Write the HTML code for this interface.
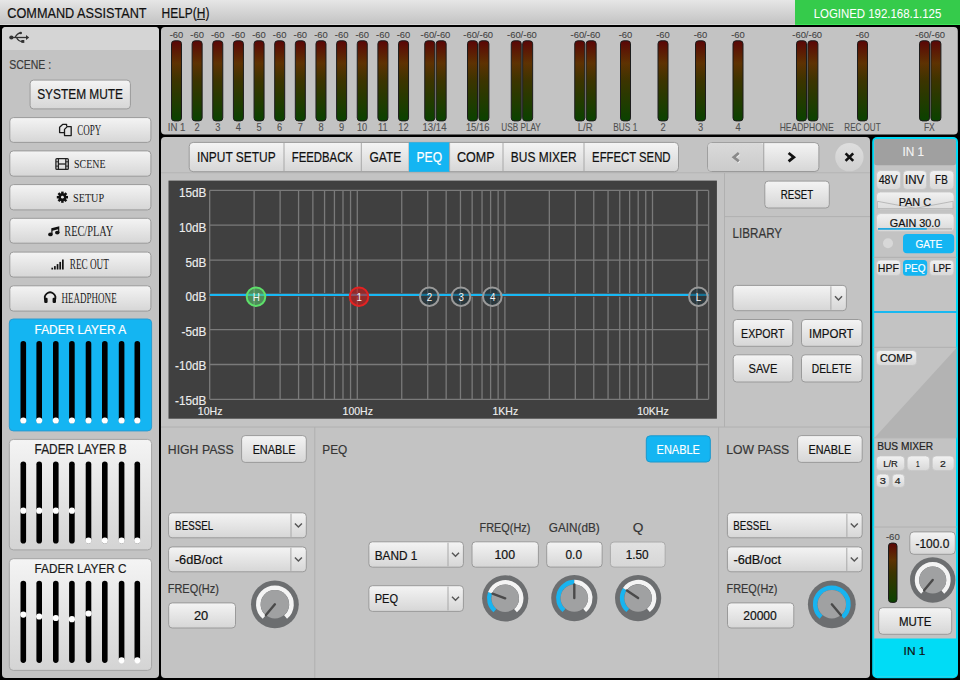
<!DOCTYPE html>
<html><head><meta charset="utf-8"><style>
html,body{margin:0;padding:0;background:#000;width:960px;height:680px;overflow:hidden}
svg{display:block}
</style></head><body>
<svg width="960" height="680" viewBox="0 0 960 680">
<defs>
<linearGradient id="menu" x1="0" y1="0" x2="0" y2="1"><stop offset="0" stop-color="#e6e6e6"/><stop offset="1" stop-color="#c3c3c3"/></linearGradient>
<linearGradient id="btn" x1="0" y1="0" x2="0" y2="1"><stop offset="0" stop-color="#f4f4f4"/><stop offset="1" stop-color="#d6d6d6"/></linearGradient>
<linearGradient id="fader" x1="0" y1="0" x2="0" y2="1"><stop offset="0" stop-color="#f4f4f4"/><stop offset="1" stop-color="#d4d4d4"/></linearGradient>
<linearGradient id="meter" x1="0" y1="0" x2="0" y2="1"><stop offset="0" stop-color="#5a0606"/><stop offset="0.28" stop-color="#5e3202"/><stop offset="0.5" stop-color="#3c3400"/><stop offset="1" stop-color="#0a4200"/></linearGradient>
<linearGradient id="sbtn" x1="0" y1="0" x2="0" y2="1"><stop offset="0" stop-color="#f2f2f2"/><stop offset="1" stop-color="#d8d8d8"/></linearGradient>
<linearGradient id="qbtn" x1="0" y1="0" x2="0" y2="1"><stop offset="0" stop-color="#e2e2e2"/><stop offset="1" stop-color="#d6d6d6"/></linearGradient>
<linearGradient id="navl" x1="0" y1="0" x2="0" y2="1"><stop offset="0" stop-color="#dadada"/><stop offset="1" stop-color="#cbcbcb"/></linearGradient>
<linearGradient id="closeg" x1="0" y1="0" x2="0" y2="1"><stop offset="0" stop-color="#dedede"/><stop offset="1" stop-color="#d0d0d0"/></linearGradient>
</defs>
<rect x="0" y="0" width="960.00" height="680.00" rx="0" fill="#000" />
<rect x="0" y="0" width="960.00" height="24.00" rx="0" fill="url(#menu)" />
<rect x="0" y="24" width="960.00" height="1.00" rx="0" fill="#d6d6d6" />
<rect x="795" y="0" width="165.00" height="24.00" rx="0" fill="#35cb4b" />
<rect x="795" y="24" width="165.00" height="1.00" rx="0" fill="#3ee65a" />
<text x="7.37" y="18.00" font-family="Liberation Sans" font-weight="normal" font-size="14.13" fill="#111" stroke="#111" stroke-width="0.2" textLength="139.17" lengthAdjust="spacingAndGlyphs" >COMMAND ASSISTANT</text>
<text x="161.54" y="18.00" font-family="Liberation Sans" font-weight="normal" font-size="14.13" fill="#111" stroke="#111" stroke-width="0.2" textLength="47.87" lengthAdjust="spacingAndGlyphs" >HELP(H)</text>
<line x1="196.5" y1="19.4" x2="205" y2="19.4" stroke="#111" stroke-width="1"/>
<text x="813.69" y="17.70" font-family="Liberation Sans" font-weight="normal" font-size="12.03" fill="#fff" stroke="#fff" stroke-width="0.05" textLength="127.56" lengthAdjust="spacingAndGlyphs" >LOGINED 192.168.1.125</text>
<rect x="2" y="27" width="157.00" height="651.00" rx="4" fill="#c3c3c3" />
<path d="M2 31 Q2 27 6 27 L155 27 Q159 27 159 31 L159 50 L2 50 Z" fill="#d5d5d5"/>
<g fill="#333" stroke="#333"><circle cx="11.4" cy="37.5" r="2.1" stroke="none"/><line x1="11.4" y1="37.5" x2="27" y2="37.5" stroke-width="1.3"/><path d="M26 34.9 L29.2 37.5 L26 40.1 Z" stroke="none"/><path d="M15 37.5 Q17.5 33 20.5 33" fill="none" stroke-width="1.3"/><path d="M16.5 37.5 Q18.5 41.5 22 41.5" fill="none" stroke-width="1.3"/><circle cx="20.7" cy="33" r="1.3" stroke="none"/><rect x="21.4" y="40" width="2.9" height="2.9" stroke="none"/></g>
<text x="9.23" y="69.00" font-family="Liberation Sans" font-weight="normal" font-size="11.88" fill="#3a3a3a" stroke="#3a3a3a" stroke-width="0.2" textLength="41.98" lengthAdjust="spacingAndGlyphs" >SCENE :</text>
<rect x="30.1" y="80.1" width="100.30" height="28.80" rx="3.5" fill="url(#btn)" stroke="#9a9a9a" stroke-width="1" />
<text x="37.17" y="99.20" font-family="Liberation Sans" font-weight="normal" font-size="13.77" fill="#111" stroke="#111" stroke-width="0.2" textLength="85.85" lengthAdjust="spacingAndGlyphs" >SYSTEM MUTE</text>
<rect x="9.799999999999999" y="117.6" width="141.10" height="24.80" rx="3.5" fill="url(#btn)" stroke="#9a9a9a" stroke-width="1" />
<text x="77.14" y="134.70" font-family="Liberation Serif" font-weight="normal" font-size="13.59" fill="#222" textLength="24.06" lengthAdjust="spacingAndGlyphs" >COPY</text>
<rect x="9.799999999999999" y="150.9" width="141.10" height="25.30" rx="3.5" fill="url(#btn)" stroke="#9a9a9a" stroke-width="1" />
<text x="74.06" y="168.00" font-family="Liberation Serif" font-weight="normal" font-size="12.67" fill="#222" textLength="31.41" lengthAdjust="spacingAndGlyphs" >SCENE</text>
<rect x="9.799999999999999" y="184.6" width="141.10" height="25.30" rx="3.5" fill="url(#btn)" stroke="#9a9a9a" stroke-width="1" />
<text x="73.04" y="201.70" font-family="Liberation Serif" font-weight="normal" font-size="13.28" fill="#222" textLength="31.03" lengthAdjust="spacingAndGlyphs" >SETUP</text>
<rect x="9.799999999999999" y="218.29999999999998" width="141.10" height="24.90" rx="3.5" fill="url(#btn)" stroke="#9a9a9a" stroke-width="1" />
<text x="64.24" y="235.75" font-family="Liberation Serif" font-weight="normal" font-size="14.50" fill="#222" textLength="48.99" lengthAdjust="spacingAndGlyphs" >REC/PLAY</text>
<rect x="9.799999999999999" y="252.1" width="141.10" height="25.00" rx="3.5" fill="url(#btn)" stroke="#9a9a9a" stroke-width="1" />
<text x="69.77" y="269.25" font-family="Liberation Serif" font-weight="normal" font-size="14.12" fill="#222" textLength="39.12" lengthAdjust="spacingAndGlyphs" >REC OUT</text>
<rect x="9.799999999999999" y="285.8" width="141.10" height="25.30" rx="3.5" fill="url(#btn)" stroke="#9a9a9a" stroke-width="1" />
<text x="61.52" y="303.00" font-family="Liberation Serif" font-weight="normal" font-size="14.12" fill="#222" textLength="55.14" lengthAdjust="spacingAndGlyphs" >HEADPHONE</text>
<g fill="none" stroke="#1a1a1a" stroke-width="1.3" stroke-linejoin="round"><path d="M64 132.6 L59.6 132.6 L59.6 127.2 L62.6 124.4 L66.6 124.4 L66.6 126.6"/><path d="M64.5 135.6 L64.5 129.4 L67.3 126.6 L71.2 126.6 L71.2 135.6 Z"/></g>
<g fill="none" stroke="#222" stroke-width="1.3"><rect x="55.9" y="158.6" width="12.4" height="10.8" rx="1"/><line x1="58.4" y1="158.6" x2="58.4" y2="169.4"/><line x1="65.8" y1="158.6" x2="65.8" y2="169.4"/><line x1="58.4" y1="164" x2="65.8" y2="164"/></g><g fill="#222"><rect x="56" y="161.3" width="2.4" height="1"/><rect x="56" y="165.6" width="2.4" height="1"/><rect x="65.8" y="161.3" width="2.4" height="1"/><rect x="65.8" y="165.6" width="2.4" height="1"/></g>
<g fill="#111"><rect x="61.15" y="191.6" width="2.5" height="3" transform="rotate(0 62.4 197.2)"/><rect x="61.15" y="191.6" width="2.5" height="3" transform="rotate(45 62.4 197.2)"/><rect x="61.15" y="191.6" width="2.5" height="3" transform="rotate(90 62.4 197.2)"/><rect x="61.15" y="191.6" width="2.5" height="3" transform="rotate(135 62.4 197.2)"/><rect x="61.15" y="191.6" width="2.5" height="3" transform="rotate(180 62.4 197.2)"/><rect x="61.15" y="191.6" width="2.5" height="3" transform="rotate(225 62.4 197.2)"/><rect x="61.15" y="191.6" width="2.5" height="3" transform="rotate(270 62.4 197.2)"/><rect x="61.15" y="191.6" width="2.5" height="3" transform="rotate(315 62.4 197.2)"/><circle cx="62.4" cy="197.2" r="3.9"/></g><circle cx="62.4" cy="197.2" r="1.4" fill="#e8e8e8"/>
<g fill="#111"><ellipse cx="50.4" cy="234.4" rx="2.3" ry="1.9"/><ellipse cx="57.3" cy="232.6" rx="2.3" ry="1.9"/><path d="M51.3 234.4 L51.3 228.3 L59.3 226.2 L59.3 232.6 L58.1 232.6 L58.1 229.2 L52.5 230.7 L52.5 234.4 Z"/></g>
<rect x="51.4" y="267.7" width="1.70" height="1.80" rx="0" fill="#111" />
<rect x="54.05" y="266.1" width="1.70" height="3.40" rx="0" fill="#111" />
<rect x="56.699999999999996" y="264.1" width="1.70" height="5.40" rx="0" fill="#111" />
<rect x="59.349999999999994" y="261.9" width="1.70" height="7.60" rx="0" fill="#111" />
<rect x="62.0" y="259.5" width="1.70" height="10.00" rx="0" fill="#111" />
<g><path d="M45.6 300.2 A5.2 5.2 0 1 1 54.6 300.2" fill="none" stroke="#111" stroke-width="1.8"/><rect x="44.2" y="297.8" width="3.4" height="5.2" rx="1.2" fill="#111"/><rect x="52.6" y="297.8" width="3.4" height="5.2" rx="1.2" fill="#111"/></g>
<rect x="9.3" y="319.0" width="142.30" height="111.90" rx="4" fill="#14b5f2" stroke="#2a9ad0" stroke-width="1" />
<text x="34.55" y="334.00" font-family="Liberation Sans" font-weight="normal" font-size="13.48" fill="#fff" stroke="#fff" stroke-width="0.2" textLength="91.57" lengthAdjust="spacingAndGlyphs" >FADER LAYER A</text>
<line x1="23.3" y1="343.9" x2="23.3" y2="420.4" stroke="#000" stroke-width="5.6" stroke-linecap="round"/>
<circle cx="23.3" cy="420.5" r="3.1" fill="#fff"/>
<line x1="39.2" y1="343.9" x2="39.2" y2="420.4" stroke="#000" stroke-width="5.6" stroke-linecap="round"/>
<circle cx="39.2" cy="420.5" r="3.1" fill="#fff"/>
<line x1="55.8" y1="343.9" x2="55.8" y2="420.4" stroke="#000" stroke-width="5.6" stroke-linecap="round"/>
<circle cx="55.8" cy="420.5" r="3.1" fill="#fff"/>
<line x1="71.9" y1="343.9" x2="71.9" y2="420.4" stroke="#000" stroke-width="5.6" stroke-linecap="round"/>
<circle cx="71.9" cy="420.5" r="3.1" fill="#fff"/>
<line x1="88.5" y1="343.9" x2="88.5" y2="420.4" stroke="#000" stroke-width="5.6" stroke-linecap="round"/>
<circle cx="88.5" cy="420.5" r="3.1" fill="#fff"/>
<line x1="104.8" y1="343.9" x2="104.8" y2="420.4" stroke="#000" stroke-width="5.6" stroke-linecap="round"/>
<circle cx="104.8" cy="420.5" r="3.1" fill="#fff"/>
<line x1="121.6" y1="343.9" x2="121.6" y2="420.4" stroke="#000" stroke-width="5.6" stroke-linecap="round"/>
<circle cx="121.6" cy="420.5" r="3.1" fill="#fff"/>
<line x1="137.3" y1="343.9" x2="137.3" y2="420.4" stroke="#000" stroke-width="5.6" stroke-linecap="round"/>
<circle cx="137.3" cy="420.5" r="3.1" fill="#fff"/>
<rect x="9.3" y="439.40000000000003" width="142.30" height="110.50" rx="4" fill="url(#fader)" stroke="#a4a4a4" stroke-width="1" />
<text x="34.55" y="454.30" font-family="Liberation Sans" font-weight="normal" font-size="13.77" fill="#1a1a1a" stroke="#1a1a1a" stroke-width="0.2" textLength="92.17" lengthAdjust="spacingAndGlyphs" >FADER LAYER B</text>
<line x1="23.3" y1="464.3" x2="23.3" y2="540.8" stroke="#000" stroke-width="5.6" stroke-linecap="round"/>
<circle cx="23.3" cy="510.7" r="3.1" fill="#fff"/>
<line x1="39.2" y1="464.3" x2="39.2" y2="540.8" stroke="#000" stroke-width="5.6" stroke-linecap="round"/>
<circle cx="39.2" cy="510.7" r="3.1" fill="#fff"/>
<line x1="55.8" y1="464.3" x2="55.8" y2="540.8" stroke="#000" stroke-width="5.6" stroke-linecap="round"/>
<circle cx="55.8" cy="510.7" r="3.1" fill="#fff"/>
<line x1="71.9" y1="464.3" x2="71.9" y2="540.8" stroke="#000" stroke-width="5.6" stroke-linecap="round"/>
<circle cx="71.9" cy="510.7" r="3.1" fill="#fff"/>
<line x1="88.5" y1="464.3" x2="88.5" y2="540.8" stroke="#000" stroke-width="5.6" stroke-linecap="round"/>
<circle cx="88.5" cy="540.6" r="3.1" fill="#fff"/>
<line x1="104.8" y1="464.3" x2="104.8" y2="540.8" stroke="#000" stroke-width="5.6" stroke-linecap="round"/>
<circle cx="104.8" cy="540.6" r="3.1" fill="#fff"/>
<line x1="121.6" y1="464.3" x2="121.6" y2="540.8" stroke="#000" stroke-width="5.6" stroke-linecap="round"/>
<circle cx="121.6" cy="540.6" r="3.1" fill="#fff"/>
<line x1="137.3" y1="464.3" x2="137.3" y2="540.8" stroke="#000" stroke-width="5.6" stroke-linecap="round"/>
<circle cx="137.3" cy="540.6" r="3.1" fill="#fff"/>
<rect x="9.3" y="558.7" width="142.30" height="111.70" rx="4" fill="url(#fader)" stroke="#a4a4a4" stroke-width="1" />
<text x="34.56" y="573.30" font-family="Liberation Sans" font-weight="normal" font-size="13.04" fill="#1a1a1a" stroke="#1a1a1a" stroke-width="0.2" textLength="91.98" lengthAdjust="spacingAndGlyphs" >FADER LAYER C</text>
<line x1="23.3" y1="583.6" x2="23.3" y2="660.1" stroke="#000" stroke-width="5.6" stroke-linecap="round"/>
<circle cx="23.3" cy="614.6" r="3.1" fill="#fff"/>
<line x1="39.2" y1="583.6" x2="39.2" y2="660.1" stroke="#000" stroke-width="5.6" stroke-linecap="round"/>
<circle cx="39.2" cy="616.5" r="3.1" fill="#fff"/>
<line x1="55.8" y1="583.6" x2="55.8" y2="660.1" stroke="#000" stroke-width="5.6" stroke-linecap="round"/>
<circle cx="55.8" cy="618" r="3.1" fill="#fff"/>
<line x1="71.9" y1="583.6" x2="71.9" y2="660.1" stroke="#000" stroke-width="5.6" stroke-linecap="round"/>
<circle cx="71.9" cy="619.2" r="3.1" fill="#fff"/>
<line x1="88.5" y1="583.6" x2="88.5" y2="660.1" stroke="#000" stroke-width="5.6" stroke-linecap="round"/>
<circle cx="88.5" cy="613.5" r="3.1" fill="#fff"/>
<line x1="104.8" y1="583.6" x2="104.8" y2="660.1" stroke="#000" stroke-width="5.6" stroke-linecap="round"/>
<line x1="121.6" y1="583.6" x2="121.6" y2="660.1" stroke="#000" stroke-width="5.6" stroke-linecap="round"/>
<circle cx="121.6" cy="660.3" r="3.1" fill="#fff"/>
<line x1="137.3" y1="583.6" x2="137.3" y2="660.1" stroke="#000" stroke-width="5.6" stroke-linecap="round"/>
<circle cx="137.3" cy="660.3" r="3.1" fill="#fff"/>
<rect x="161" y="27" width="796.80" height="107.50" rx="4" fill="#c3c3c3" />
<rect x="171.5" y="40.8" width="10.00" height="80.10" rx="3" fill="url(#meter)" stroke="#1c1c1c" stroke-width="1" />
<text x="169.67" y="38.00" font-family="Liberation Sans" font-weight="normal" font-size="9.71" fill="#444" stroke="#444" stroke-width="0.1" textLength="13.61" lengthAdjust="spacingAndGlyphs" >-60</text>
<text x="167.73" y="130.80" font-family="Liberation Sans" font-weight="normal" font-size="10.29" fill="#505050" stroke="#505050" stroke-width="0.1" textLength="17.69" lengthAdjust="spacingAndGlyphs" >IN 1</text>
<rect x="192.14" y="40.8" width="10.00" height="80.10" rx="3" fill="url(#meter)" stroke="#1c1c1c" stroke-width="1" />
<text x="190.31" y="38.00" font-family="Liberation Sans" font-weight="normal" font-size="9.71" fill="#444" stroke="#444" stroke-width="0.1" textLength="13.61" lengthAdjust="spacingAndGlyphs" >-60</text>
<text x="194.55" y="130.80" font-family="Liberation Sans" font-weight="normal" font-size="10.29" fill="#505050" stroke="#505050" stroke-width="0.1" textLength="5.15" lengthAdjust="spacingAndGlyphs" >2</text>
<rect x="212.78" y="40.8" width="10.00" height="80.10" rx="3" fill="url(#meter)" stroke="#1c1c1c" stroke-width="1" />
<text x="210.95" y="38.00" font-family="Liberation Sans" font-weight="normal" font-size="9.71" fill="#444" stroke="#444" stroke-width="0.1" textLength="13.61" lengthAdjust="spacingAndGlyphs" >-60</text>
<text x="215.23" y="130.80" font-family="Liberation Sans" font-weight="normal" font-size="10.29" fill="#505050" stroke="#505050" stroke-width="0.1" textLength="5.15" lengthAdjust="spacingAndGlyphs" >3</text>
<rect x="233.42000000000002" y="40.8" width="10.00" height="80.10" rx="3" fill="url(#meter)" stroke="#1c1c1c" stroke-width="1" />
<text x="231.59" y="38.00" font-family="Liberation Sans" font-weight="normal" font-size="9.71" fill="#444" stroke="#444" stroke-width="0.1" textLength="13.61" lengthAdjust="spacingAndGlyphs" >-60</text>
<text x="235.87" y="130.80" font-family="Liberation Sans" font-weight="normal" font-size="10.29" fill="#505050" stroke="#505050" stroke-width="0.1" textLength="5.15" lengthAdjust="spacingAndGlyphs" >4</text>
<rect x="254.06" y="40.8" width="10.00" height="80.10" rx="3" fill="url(#meter)" stroke="#1c1c1c" stroke-width="1" />
<text x="252.23" y="38.00" font-family="Liberation Sans" font-weight="normal" font-size="9.71" fill="#444" stroke="#444" stroke-width="0.1" textLength="13.61" lengthAdjust="spacingAndGlyphs" >-60</text>
<text x="256.49" y="130.80" font-family="Liberation Sans" font-weight="normal" font-size="10.29" fill="#505050" stroke="#505050" stroke-width="0.1" textLength="5.15" lengthAdjust="spacingAndGlyphs" >5</text>
<rect x="274.7" y="40.8" width="10.00" height="80.10" rx="3" fill="url(#meter)" stroke="#1c1c1c" stroke-width="1" />
<text x="272.87" y="38.00" font-family="Liberation Sans" font-weight="normal" font-size="9.71" fill="#444" stroke="#444" stroke-width="0.1" textLength="13.61" lengthAdjust="spacingAndGlyphs" >-60</text>
<text x="277.08" y="130.80" font-family="Liberation Sans" font-weight="normal" font-size="10.29" fill="#505050" stroke="#505050" stroke-width="0.1" textLength="5.15" lengthAdjust="spacingAndGlyphs" >6</text>
<rect x="295.34000000000003" y="40.8" width="10.00" height="80.10" rx="3" fill="url(#meter)" stroke="#1c1c1c" stroke-width="1" />
<text x="293.51" y="38.00" font-family="Liberation Sans" font-weight="normal" font-size="9.71" fill="#444" stroke="#444" stroke-width="0.1" textLength="13.61" lengthAdjust="spacingAndGlyphs" >-60</text>
<text x="297.75" y="130.80" font-family="Liberation Sans" font-weight="normal" font-size="10.29" fill="#505050" stroke="#505050" stroke-width="0.1" textLength="5.15" lengthAdjust="spacingAndGlyphs" >7</text>
<rect x="315.98" y="40.8" width="10.00" height="80.10" rx="3" fill="url(#meter)" stroke="#1c1c1c" stroke-width="1" />
<text x="314.15" y="38.00" font-family="Liberation Sans" font-weight="normal" font-size="9.71" fill="#444" stroke="#444" stroke-width="0.1" textLength="13.61" lengthAdjust="spacingAndGlyphs" >-60</text>
<text x="318.41" y="130.80" font-family="Liberation Sans" font-weight="normal" font-size="10.29" fill="#505050" stroke="#505050" stroke-width="0.1" textLength="5.15" lengthAdjust="spacingAndGlyphs" >8</text>
<rect x="336.62" y="40.8" width="10.00" height="80.10" rx="3" fill="url(#meter)" stroke="#1c1c1c" stroke-width="1" />
<text x="334.79" y="38.00" font-family="Liberation Sans" font-weight="normal" font-size="9.71" fill="#444" stroke="#444" stroke-width="0.1" textLength="13.61" lengthAdjust="spacingAndGlyphs" >-60</text>
<text x="339.05" y="130.80" font-family="Liberation Sans" font-weight="normal" font-size="10.29" fill="#505050" stroke="#505050" stroke-width="0.1" textLength="5.15" lengthAdjust="spacingAndGlyphs" >9</text>
<rect x="357.26" y="40.8" width="10.00" height="80.10" rx="3" fill="url(#meter)" stroke="#1c1c1c" stroke-width="1" />
<text x="355.43" y="38.00" font-family="Liberation Sans" font-weight="normal" font-size="9.71" fill="#444" stroke="#444" stroke-width="0.1" textLength="13.61" lengthAdjust="spacingAndGlyphs" >-60</text>
<text x="356.94" y="130.80" font-family="Liberation Sans" font-weight="normal" font-size="10.29" fill="#505050" stroke="#505050" stroke-width="0.1" textLength="10.30" lengthAdjust="spacingAndGlyphs" >10</text>
<rect x="377.9" y="40.8" width="10.00" height="80.10" rx="3" fill="url(#meter)" stroke="#1c1c1c" stroke-width="1" />
<text x="376.07" y="38.00" font-family="Liberation Sans" font-weight="normal" font-size="9.71" fill="#444" stroke="#444" stroke-width="0.1" textLength="13.61" lengthAdjust="spacingAndGlyphs" >-60</text>
<text x="377.97" y="130.80" font-family="Liberation Sans" font-weight="normal" font-size="10.29" fill="#505050" stroke="#505050" stroke-width="0.1" textLength="9.61" lengthAdjust="spacingAndGlyphs" >11</text>
<rect x="398.54" y="40.8" width="10.00" height="80.10" rx="3" fill="url(#meter)" stroke="#1c1c1c" stroke-width="1" />
<text x="396.71" y="38.00" font-family="Liberation Sans" font-weight="normal" font-size="9.71" fill="#444" stroke="#444" stroke-width="0.1" textLength="13.61" lengthAdjust="spacingAndGlyphs" >-60</text>
<text x="398.26" y="130.80" font-family="Liberation Sans" font-weight="normal" font-size="10.29" fill="#505050" stroke="#505050" stroke-width="0.1" textLength="10.30" lengthAdjust="spacingAndGlyphs" >12</text>
<rect x="424.75" y="40.8" width="10.00" height="80.10" rx="3" fill="url(#meter)" stroke="#1c1c1c" stroke-width="1" />
<rect x="436.15" y="40.8" width="10.00" height="80.10" rx="3" fill="url(#meter)" stroke="#1c1c1c" stroke-width="1" />
<text x="420.52" y="38.00" font-family="Liberation Sans" font-weight="normal" font-size="9.71" fill="#444" stroke="#444" stroke-width="0.1" textLength="29.84" lengthAdjust="spacingAndGlyphs" >-60/-60</text>
<text x="422.53" y="130.80" font-family="Liberation Sans" font-weight="normal" font-size="10.29" fill="#505050" stroke="#505050" stroke-width="0.1" textLength="23.98" lengthAdjust="spacingAndGlyphs" >13/14</text>
<rect x="467.5" y="40.8" width="10.00" height="80.10" rx="3" fill="url(#meter)" stroke="#1c1c1c" stroke-width="1" />
<rect x="478.9" y="40.8" width="10.00" height="80.10" rx="3" fill="url(#meter)" stroke="#1c1c1c" stroke-width="1" />
<text x="463.27" y="38.00" font-family="Liberation Sans" font-weight="normal" font-size="9.71" fill="#444" stroke="#444" stroke-width="0.1" textLength="29.84" lengthAdjust="spacingAndGlyphs" >-60/-60</text>
<text x="465.90" y="130.80" font-family="Liberation Sans" font-weight="normal" font-size="10.29" fill="#505050" stroke="#505050" stroke-width="0.1" textLength="23.50" lengthAdjust="spacingAndGlyphs" >15/16</text>
<rect x="511.25" y="40.8" width="10.00" height="80.10" rx="3" fill="url(#meter)" stroke="#1c1c1c" stroke-width="1" />
<rect x="522.65" y="40.8" width="10.00" height="80.10" rx="3" fill="url(#meter)" stroke="#1c1c1c" stroke-width="1" />
<text x="507.02" y="38.00" font-family="Liberation Sans" font-weight="normal" font-size="9.71" fill="#444" stroke="#444" stroke-width="0.1" textLength="29.84" lengthAdjust="spacingAndGlyphs" >-60/-60</text>
<text x="501.29" y="130.80" font-family="Liberation Sans" font-weight="normal" font-size="10.29" fill="#505050" stroke="#505050" stroke-width="0.1" textLength="39.50" lengthAdjust="spacingAndGlyphs" >USB PLAY</text>
<rect x="574.75" y="40.8" width="10.00" height="80.10" rx="3" fill="url(#meter)" stroke="#1c1c1c" stroke-width="1" />
<rect x="586.15" y="40.8" width="10.00" height="80.10" rx="3" fill="url(#meter)" stroke="#1c1c1c" stroke-width="1" />
<text x="570.52" y="38.00" font-family="Liberation Sans" font-weight="normal" font-size="9.71" fill="#444" stroke="#444" stroke-width="0.1" textLength="29.84" lengthAdjust="spacingAndGlyphs" >-60/-60</text>
<text x="577.63" y="130.80" font-family="Liberation Sans" font-weight="normal" font-size="10.29" fill="#505050" stroke="#505050" stroke-width="0.1" textLength="14.97" lengthAdjust="spacingAndGlyphs" >L/R</text>
<rect x="796.5" y="40.8" width="10.00" height="80.10" rx="3" fill="url(#meter)" stroke="#1c1c1c" stroke-width="1" />
<rect x="807.9" y="40.8" width="10.00" height="80.10" rx="3" fill="url(#meter)" stroke="#1c1c1c" stroke-width="1" />
<text x="792.27" y="38.00" font-family="Liberation Sans" font-weight="normal" font-size="9.71" fill="#444" stroke="#444" stroke-width="0.1" textLength="29.84" lengthAdjust="spacingAndGlyphs" >-60/-60</text>
<text x="779.72" y="130.80" font-family="Liberation Sans" font-weight="normal" font-size="10.29" fill="#505050" stroke="#505050" stroke-width="0.1" textLength="53.92" lengthAdjust="spacingAndGlyphs" >HEADPHONE</text>
<rect x="919.5" y="40.8" width="10.00" height="80.10" rx="3" fill="url(#meter)" stroke="#1c1c1c" stroke-width="1" />
<rect x="930.9" y="40.8" width="10.00" height="80.10" rx="3" fill="url(#meter)" stroke="#1c1c1c" stroke-width="1" />
<text x="915.27" y="38.00" font-family="Liberation Sans" font-weight="normal" font-size="9.71" fill="#444" stroke="#444" stroke-width="0.1" textLength="29.84" lengthAdjust="spacingAndGlyphs" >-60/-60</text>
<text x="923.92" y="130.80" font-family="Liberation Sans" font-weight="normal" font-size="10.29" fill="#505050" stroke="#505050" stroke-width="0.1" textLength="10.83" lengthAdjust="spacingAndGlyphs" >FX</text>
<rect x="620.5" y="40.8" width="10.00" height="80.10" rx="3" fill="url(#meter)" stroke="#1c1c1c" stroke-width="1" />
<text x="618.67" y="38.00" font-family="Liberation Sans" font-weight="normal" font-size="9.71" fill="#444" stroke="#444" stroke-width="0.1" textLength="13.61" lengthAdjust="spacingAndGlyphs" >-60</text>
<text x="613.34" y="130.80" font-family="Liberation Sans" font-weight="normal" font-size="10.29" fill="#505050" stroke="#505050" stroke-width="0.1" textLength="23.94" lengthAdjust="spacingAndGlyphs" >BUS 1</text>
<rect x="658.0" y="40.8" width="10.00" height="80.10" rx="3" fill="url(#meter)" stroke="#1c1c1c" stroke-width="1" />
<text x="656.17" y="38.00" font-family="Liberation Sans" font-weight="normal" font-size="9.71" fill="#444" stroke="#444" stroke-width="0.1" textLength="13.61" lengthAdjust="spacingAndGlyphs" >-60</text>
<text x="660.41" y="130.80" font-family="Liberation Sans" font-weight="normal" font-size="10.29" fill="#505050" stroke="#505050" stroke-width="0.1" textLength="5.15" lengthAdjust="spacingAndGlyphs" >2</text>
<rect x="695.5" y="40.8" width="10.00" height="80.10" rx="3" fill="url(#meter)" stroke="#1c1c1c" stroke-width="1" />
<text x="693.67" y="38.00" font-family="Liberation Sans" font-weight="normal" font-size="9.71" fill="#444" stroke="#444" stroke-width="0.1" textLength="13.61" lengthAdjust="spacingAndGlyphs" >-60</text>
<text x="697.95" y="130.80" font-family="Liberation Sans" font-weight="normal" font-size="10.29" fill="#505050" stroke="#505050" stroke-width="0.1" textLength="5.15" lengthAdjust="spacingAndGlyphs" >3</text>
<rect x="733.0" y="40.8" width="10.00" height="80.10" rx="3" fill="url(#meter)" stroke="#1c1c1c" stroke-width="1" />
<text x="731.17" y="38.00" font-family="Liberation Sans" font-weight="normal" font-size="9.71" fill="#444" stroke="#444" stroke-width="0.1" textLength="13.61" lengthAdjust="spacingAndGlyphs" >-60</text>
<text x="735.45" y="130.80" font-family="Liberation Sans" font-weight="normal" font-size="10.29" fill="#505050" stroke="#505050" stroke-width="0.1" textLength="5.15" lengthAdjust="spacingAndGlyphs" >4</text>
<rect x="857.5" y="40.8" width="10.00" height="80.10" rx="3" fill="url(#meter)" stroke="#1c1c1c" stroke-width="1" />
<text x="855.67" y="38.00" font-family="Liberation Sans" font-weight="normal" font-size="9.71" fill="#444" stroke="#444" stroke-width="0.1" textLength="13.61" lengthAdjust="spacingAndGlyphs" >-60</text>
<text x="844.36" y="130.80" font-family="Liberation Sans" font-weight="normal" font-size="10.29" fill="#505050" stroke="#505050" stroke-width="0.1" textLength="36.21" lengthAdjust="spacingAndGlyphs" >REC OUT</text>
<rect x="161" y="137" width="709.00" height="541.00" rx="4" fill="#c3c3c3" />
<line x1="161" y1="172.8" x2="870" y2="172.8" stroke="#b4b4b4" stroke-width="1"/>
<rect x="189.2" y="142.4" width="489.30" height="29.30" rx="4" fill="url(#btn)" stroke="#9a9a9a" stroke-width="1" />
<text x="196.93" y="161.90" font-family="Liberation Sans" font-weight="normal" font-size="14.35" fill="#111" stroke="#111" stroke-width="0.2" textLength="78.72" lengthAdjust="spacingAndGlyphs" >INPUT SETUP</text>
<line x1="284" y1="143" x2="284" y2="171.2" stroke="#a8a8a8" stroke-width="1"/>
<text x="291.69" y="161.90" font-family="Liberation Sans" font-weight="normal" font-size="14.35" fill="#111" stroke="#111" stroke-width="0.2" textLength="61.27" lengthAdjust="spacingAndGlyphs" >FEEDBACK</text>
<line x1="361.3" y1="143" x2="361.3" y2="171.2" stroke="#a8a8a8" stroke-width="1"/>
<text x="369.40" y="161.90" font-family="Liberation Sans" font-weight="normal" font-size="14.35" fill="#111" stroke="#111" stroke-width="0.2" textLength="31.93" lengthAdjust="spacingAndGlyphs" >GATE</text>
<line x1="409" y1="143" x2="409" y2="171.2" stroke="#a8a8a8" stroke-width="1"/>
<rect x="409" y="142.3" width="40.60" height="29.50" rx="0" fill="#14b5f2" />
<text x="416.53" y="161.90" font-family="Liberation Sans" font-weight="normal" font-size="14.35" fill="#fff" stroke="#fff" stroke-width="0.2" textLength="25.53" lengthAdjust="spacingAndGlyphs" >PEQ</text>
<line x1="449.6" y1="143" x2="449.6" y2="171.2" stroke="#a8a8a8" stroke-width="1"/>
<text x="456.97" y="161.90" font-family="Liberation Sans" font-weight="normal" font-size="14.35" fill="#111" stroke="#111" stroke-width="0.2" textLength="37.66" lengthAdjust="spacingAndGlyphs" >COMP</text>
<line x1="503" y1="143" x2="503" y2="171.2" stroke="#a8a8a8" stroke-width="1"/>
<text x="510.85" y="161.90" font-family="Liberation Sans" font-weight="normal" font-size="14.35" fill="#111" stroke="#111" stroke-width="0.2" textLength="65.65" lengthAdjust="spacingAndGlyphs" >BUS MIXER</text>
<line x1="584" y1="143" x2="584" y2="171.2" stroke="#a8a8a8" stroke-width="1"/>
<text x="592.09" y="161.90" font-family="Liberation Sans" font-weight="normal" font-size="14.35" fill="#111" stroke="#111" stroke-width="0.2" textLength="78.44" lengthAdjust="spacingAndGlyphs" >EFFECT SEND</text>
<rect x="707.6" y="142.6" width="111.30" height="28.90" rx="4" fill="url(#btn)" stroke="#9a9a9a" stroke-width="1" />
<rect x="708" y="143" width="55.50" height="28.10" rx="3.5" fill="url(#navl)" />
<line x1="763.75" y1="143" x2="763.75" y2="171.2" stroke="#a0a0a0" stroke-width="1"/>
<path d="M738.8 153 L733.8 157.2 L738.8 161.4" fill="none" stroke="#f0f0f0" stroke-width="2.8" transform="translate(0.6,0.8)"/>
<path d="M738.8 153 L733.8 157.2 L738.8 161.4" fill="none" stroke="#8a8a8a" stroke-width="2.8"/>
<path d="M788.6 153 L793.8 157.2 L788.6 161.4" fill="none" stroke="#111" stroke-width="2.8"/>
<circle cx="849.4" cy="157.1" r="14.2" fill="url(#closeg)"/>
<path d="M845.6 153.3 L853.2 160.9 M853.2 153.3 L845.6 160.9" stroke="#111" stroke-width="2.6"/>
<rect x="168.5" y="180.6" width="548.40" height="238.10" rx="0" fill="#404040" />
<line x1="209.7" y1="190.4" x2="209.7" y2="399.3" stroke="#7a7a7a" stroke-width="1.3"/>
<line x1="254.1320273600036" y1="190.4" x2="254.1320273600036" y2="399.3" stroke="#7a7a7a" stroke-width="1.3"/>
<line x1="280.12309719662215" y1="190.4" x2="280.12309719662215" y2="399.3" stroke="#7a7a7a" stroke-width="1.3"/>
<line x1="298.5640547200072" y1="190.4" x2="298.5640547200072" y2="399.3" stroke="#7a7a7a" stroke-width="1.3"/>
<line x1="312.86797263999637" y1="190.4" x2="312.86797263999637" y2="399.3" stroke="#7a7a7a" stroke-width="1.3"/>
<line x1="324.5551245566258" y1="190.4" x2="324.5551245566258" y2="399.3" stroke="#7a7a7a" stroke-width="1.3"/>
<line x1="334.4364707061043" y1="190.4" x2="334.4364707061043" y2="399.3" stroke="#7a7a7a" stroke-width="1.3"/>
<line x1="342.99608208001086" y1="190.4" x2="342.99608208001086" y2="399.3" stroke="#7a7a7a" stroke-width="1.3"/>
<line x1="350.5461943932443" y1="190.4" x2="350.5461943932443" y2="399.3" stroke="#7a7a7a" stroke-width="1.3"/>
<line x1="357.29999999999995" y1="190.4" x2="357.29999999999995" y2="399.3" stroke="#7a7a7a" stroke-width="1.3"/>
<line x1="401.7320273600036" y1="190.4" x2="401.7320273600036" y2="399.3" stroke="#7a7a7a" stroke-width="1.3"/>
<line x1="427.7230971966221" y1="190.4" x2="427.7230971966221" y2="399.3" stroke="#7a7a7a" stroke-width="1.3"/>
<line x1="446.16405472000724" y1="190.4" x2="446.16405472000724" y2="399.3" stroke="#7a7a7a" stroke-width="1.3"/>
<line x1="460.46797263999633" y1="190.4" x2="460.46797263999633" y2="399.3" stroke="#7a7a7a" stroke-width="1.3"/>
<line x1="472.15512455662576" y1="190.4" x2="472.15512455662576" y2="399.3" stroke="#7a7a7a" stroke-width="1.3"/>
<line x1="482.0364707061043" y1="190.4" x2="482.0364707061043" y2="399.3" stroke="#7a7a7a" stroke-width="1.3"/>
<line x1="490.59608208001083" y1="190.4" x2="490.59608208001083" y2="399.3" stroke="#7a7a7a" stroke-width="1.3"/>
<line x1="498.1461943932443" y1="190.4" x2="498.1461943932443" y2="399.3" stroke="#7a7a7a" stroke-width="1.3"/>
<line x1="504.9" y1="190.4" x2="504.9" y2="399.3" stroke="#7a7a7a" stroke-width="1.3"/>
<line x1="549.3320273600036" y1="190.4" x2="549.3320273600036" y2="399.3" stroke="#7a7a7a" stroke-width="1.3"/>
<line x1="575.3230971966223" y1="190.4" x2="575.3230971966223" y2="399.3" stroke="#7a7a7a" stroke-width="1.3"/>
<line x1="593.7640547200073" y1="190.4" x2="593.7640547200073" y2="399.3" stroke="#7a7a7a" stroke-width="1.3"/>
<line x1="608.0679726399964" y1="190.4" x2="608.0679726399964" y2="399.3" stroke="#7a7a7a" stroke-width="1.3"/>
<line x1="619.7551245566258" y1="190.4" x2="619.7551245566258" y2="399.3" stroke="#7a7a7a" stroke-width="1.3"/>
<line x1="629.6364707061043" y1="190.4" x2="629.6364707061043" y2="399.3" stroke="#7a7a7a" stroke-width="1.3"/>
<line x1="638.1960820800109" y1="190.4" x2="638.1960820800109" y2="399.3" stroke="#7a7a7a" stroke-width="1.3"/>
<line x1="645.7461943932443" y1="190.4" x2="645.7461943932443" y2="399.3" stroke="#7a7a7a" stroke-width="1.3"/>
<line x1="652.5" y1="190.4" x2="652.5" y2="399.3" stroke="#7a7a7a" stroke-width="1.3"/>
<line x1="696.9320273600035" y1="190.4" x2="696.9320273600035" y2="399.3" stroke="#7a7a7a" stroke-width="1.3"/>
<line x1="696.9320273600035" y1="190.4" x2="696.9320273600035" y2="399.3" stroke="#7a7a7a" stroke-width="1.3"/>
<line x1="708.6" y1="190.4" x2="708.6" y2="399.3" stroke="#7a7a7a" stroke-width="1.3"/>
<line x1="209.7" y1="190.4" x2="708.6" y2="190.4" stroke="#7a7a7a" stroke-width="1.3"/>
<line x1="209.7" y1="225.21666666666667" x2="708.6" y2="225.21666666666667" stroke="#7a7a7a" stroke-width="1.3"/>
<line x1="209.7" y1="260.03333333333336" x2="708.6" y2="260.03333333333336" stroke="#7a7a7a" stroke-width="1.3"/>
<line x1="209.7" y1="294.85" x2="708.6" y2="294.85" stroke="#7a7a7a" stroke-width="1.3"/>
<line x1="209.7" y1="329.6666666666667" x2="708.6" y2="329.6666666666667" stroke="#7a7a7a" stroke-width="1.3"/>
<line x1="209.7" y1="364.48333333333335" x2="708.6" y2="364.48333333333335" stroke="#7a7a7a" stroke-width="1.3"/>
<line x1="209.7" y1="399.3" x2="708.6" y2="399.3" stroke="#7a7a7a" stroke-width="1.3"/>
<text x="178.91" y="197.40" font-family="Liberation Sans" font-weight="normal" font-size="12.61" fill="#eeeeee" stroke="#eeeeee" stroke-width="0.15" textLength="27.39" lengthAdjust="spacingAndGlyphs" >15dB</text>
<text x="178.91" y="231.98" font-family="Liberation Sans" font-weight="normal" font-size="12.61" fill="#eeeeee" stroke="#eeeeee" stroke-width="0.15" textLength="27.39" lengthAdjust="spacingAndGlyphs" >10dB</text>
<text x="185.47" y="266.56" font-family="Liberation Sans" font-weight="normal" font-size="12.61" fill="#eeeeee" stroke="#eeeeee" stroke-width="0.15" textLength="20.87" lengthAdjust="spacingAndGlyphs" >5dB</text>
<text x="185.47" y="301.14" font-family="Liberation Sans" font-weight="normal" font-size="12.61" fill="#eeeeee" stroke="#eeeeee" stroke-width="0.15" textLength="20.87" lengthAdjust="spacingAndGlyphs" >0dB</text>
<text x="181.54" y="335.72" font-family="Liberation Sans" font-weight="normal" font-size="12.61" fill="#eeeeee" stroke="#eeeeee" stroke-width="0.15" textLength="24.77" lengthAdjust="spacingAndGlyphs" >-5dB</text>
<text x="175.04" y="370.30" font-family="Liberation Sans" font-weight="normal" font-size="12.61" fill="#eeeeee" stroke="#eeeeee" stroke-width="0.15" textLength="31.29" lengthAdjust="spacingAndGlyphs" >-10dB</text>
<text x="175.04" y="404.88" font-family="Liberation Sans" font-weight="normal" font-size="12.61" fill="#eeeeee" stroke="#eeeeee" stroke-width="0.15" textLength="31.29" lengthAdjust="spacingAndGlyphs" >-15dB</text>
<text x="197.87" y="415.20" font-family="Liberation Sans" font-weight="normal" font-size="11.30" fill="#eeeeee" stroke="#eeeeee" stroke-width="0.15" textLength="24.54" lengthAdjust="spacingAndGlyphs" >10Hz</text>
<text x="342.55" y="415.20" font-family="Liberation Sans" font-weight="normal" font-size="11.30" fill="#eeeeee" stroke="#eeeeee" stroke-width="0.15" textLength="30.39" lengthAdjust="spacingAndGlyphs" >100Hz</text>
<text x="492.49" y="415.20" font-family="Liberation Sans" font-weight="normal" font-size="11.30" fill="#eeeeee" stroke="#eeeeee" stroke-width="0.15" textLength="25.71" lengthAdjust="spacingAndGlyphs" >1KHz</text>
<text x="637.17" y="415.20" font-family="Liberation Sans" font-weight="normal" font-size="11.30" fill="#eeeeee" stroke="#eeeeee" stroke-width="0.15" textLength="31.56" lengthAdjust="spacingAndGlyphs" >10KHz</text>
<line x1="209.7" y1="294.8" x2="708.6" y2="294.8" stroke="#5a3c34" stroke-width="3.8"/>
<line x1="209.7" y1="294.8" x2="708.6" y2="294.8" stroke="#18b8f4" stroke-width="2.2"/>
<circle cx="256" cy="296.7" r="9.3" fill="rgba(90,200,110,0.55)" stroke="#5ee06a" stroke-width="2"/>
<text x="252.74" y="301.00" font-family="Liberation Sans" font-weight="normal" font-size="11.16" fill="#f4f4f4" textLength="7.09" lengthAdjust="spacingAndGlyphs" >H</text>
<circle cx="359" cy="296.7" r="9.3" fill="rgba(190,30,30,0.65)" stroke="#e42222" stroke-width="2"/>
<text x="356.43" y="301.00" font-family="Liberation Sans" font-weight="normal" font-size="11.16" fill="#f4f4f4" textLength="5.46" lengthAdjust="spacingAndGlyphs" >1</text>
<circle cx="429.3" cy="296.7" r="9.3" fill="rgba(20,45,55,0.5)" stroke="#9a9a9a" stroke-width="2"/>
<text x="426.85" y="301.00" font-family="Liberation Sans" font-weight="normal" font-size="11.16" fill="#f4f4f4" textLength="5.46" lengthAdjust="spacingAndGlyphs" >2</text>
<circle cx="461" cy="296.7" r="9.3" fill="rgba(20,45,55,0.5)" stroke="#9a9a9a" stroke-width="2"/>
<text x="458.60" y="301.00" font-family="Liberation Sans" font-weight="normal" font-size="11.16" fill="#f4f4f4" textLength="5.46" lengthAdjust="spacingAndGlyphs" >3</text>
<circle cx="492.3" cy="296.7" r="9.3" fill="rgba(20,45,55,0.5)" stroke="#9a9a9a" stroke-width="2"/>
<text x="489.90" y="301.00" font-family="Liberation Sans" font-weight="normal" font-size="11.16" fill="#f4f4f4" textLength="5.46" lengthAdjust="spacingAndGlyphs" >4</text>
<circle cx="698.4" cy="296.7" r="9.3" fill="rgba(20,45,55,0.5)" stroke="#9a9a9a" stroke-width="2"/>
<text x="695.73" y="301.00" font-family="Liberation Sans" font-weight="normal" font-size="11.16" fill="#f4f4f4" textLength="5.46" lengthAdjust="spacingAndGlyphs" >L</text>
<line x1="724.5" y1="173" x2="724.5" y2="427" stroke="#b0b0b0" stroke-width="1"/>
<line x1="724.5" y1="216.6" x2="870" y2="216.6" stroke="#b0b0b0" stroke-width="1"/>
<rect x="764.8000000000001" y="181.1" width="64.50" height="26.90" rx="3.5" fill="url(#btn)" stroke="#9a9a9a" stroke-width="1" />
<text x="780.82" y="199.10" font-family="Liberation Sans" font-weight="normal" font-size="11.88" fill="#111" stroke="#111" stroke-width="0.2" textLength="32.36" lengthAdjust="spacingAndGlyphs" >RESET</text>
<text x="732.57" y="237.80" font-family="Liberation Sans" font-weight="normal" font-size="14.20" fill="#363636" stroke="#363636" stroke-width="0.2" textLength="49.58" lengthAdjust="spacingAndGlyphs" >LIBRARY</text>
<rect x="732.9" y="285.40000000000003" width="113.50" height="25.30" rx="3.5" fill="url(#btn)" stroke="#9a9a9a" stroke-width="1" />
<line x1="830.9" y1="286.3" x2="830.9" y2="309.8" stroke="#a8a8a8" stroke-width="1"/>
<path d="M835.0 296.2 L838.5 299.9 L842.0 296.2" fill="none" stroke="#555" stroke-width="1.4"/>
<rect x="733.2" y="319.5" width="59.60" height="26.80" rx="3.5" fill="url(#btn)" stroke="#9a9a9a" stroke-width="1" />
<rect x="801.5" y="319.5" width="60.60" height="26.80" rx="3.5" fill="url(#btn)" stroke="#9a9a9a" stroke-width="1" />
<rect x="733.2" y="354.8" width="59.60" height="27.20" rx="3.5" fill="url(#btn)" stroke="#9a9a9a" stroke-width="1" />
<rect x="801.5" y="354.8" width="60.60" height="27.20" rx="3.5" fill="url(#btn)" stroke="#9a9a9a" stroke-width="1" />
<text x="741.05" y="337.90" font-family="Liberation Sans" font-weight="normal" font-size="12.75" fill="#111" stroke="#111" stroke-width="0.2" textLength="43.55" lengthAdjust="spacingAndGlyphs" >EXPORT</text>
<text x="809.06" y="337.90" font-family="Liberation Sans" font-weight="normal" font-size="12.75" fill="#111" stroke="#111" stroke-width="0.2" textLength="44.57" lengthAdjust="spacingAndGlyphs" >IMPORT</text>
<text x="748.60" y="373.00" font-family="Liberation Sans" font-weight="normal" font-size="12.17" fill="#111" stroke="#111" stroke-width="0.2" textLength="28.79" lengthAdjust="spacingAndGlyphs" >SAVE</text>
<text x="811.78" y="373.00" font-family="Liberation Sans" font-weight="normal" font-size="12.17" fill="#111" stroke="#111" stroke-width="0.2" textLength="39.83" lengthAdjust="spacingAndGlyphs" >DELETE</text>
<line x1="161" y1="427" x2="870" y2="427" stroke="#b0b0b0" stroke-width="1"/>
<line x1="314.8" y1="427" x2="314.8" y2="678" stroke="#b0b0b0" stroke-width="1"/>
<line x1="718.6" y1="427" x2="718.6" y2="678" stroke="#b0b0b0" stroke-width="1"/>
<text x="167.82" y="453.60" font-family="Liberation Sans" font-weight="normal" font-size="13.33" fill="#363636" stroke="#363636" stroke-width="0.2" textLength="65.89" lengthAdjust="spacingAndGlyphs" >HIGH PASS</text>
<rect x="241.6" y="435.6" width="64.70" height="26.80" rx="3.5" fill="url(#btn)" stroke="#9a9a9a" stroke-width="1" />
<text x="252.63" y="453.75" font-family="Liberation Sans" font-weight="normal" font-size="12.68" fill="#111" stroke="#111" stroke-width="0.2" textLength="42.82" lengthAdjust="spacingAndGlyphs" >ENABLE</text>
<rect x="168.6" y="512.8000000000001" width="137.70" height="25.00" rx="3.5" fill="url(#btn)" stroke="#9a9a9a" stroke-width="1" />
<line x1="291.0" y1="513.7" x2="291.0" y2="536.9" stroke="#a8a8a8" stroke-width="1"/>
<path d="M294.9 523.5 L298.4 527.1 L301.9 523.5" fill="none" stroke="#555" stroke-width="1.4"/>
<text x="175.12" y="530.30" font-family="Liberation Sans" font-weight="normal" font-size="12.03" fill="#111" stroke="#111" stroke-width="0.2" textLength="38.09" lengthAdjust="spacingAndGlyphs" >BESSEL</text>
<rect x="168.6" y="546.9" width="137.70" height="24.90" rx="3.5" fill="url(#btn)" stroke="#9a9a9a" stroke-width="1" />
<line x1="290.9" y1="547.8" x2="290.9" y2="570.9" stroke="#a8a8a8" stroke-width="1"/>
<path d="M294.9 557.5 L298.4 561.1 L301.9 557.5" fill="none" stroke="#555" stroke-width="1.4"/>
<text x="174.89" y="564.40" font-family="Liberation Sans" font-weight="normal" font-size="12.75" fill="#111" stroke="#111" stroke-width="0.2" textLength="47.36" lengthAdjust="spacingAndGlyphs" >-6dB/oct</text>
<text x="167.72" y="592.50" font-family="Liberation Sans" font-weight="normal" font-size="12.75" fill="#363636" stroke="#363636" stroke-width="0.2" textLength="51.19" lengthAdjust="spacingAndGlyphs" >FREQ(Hz)</text>
<rect x="168.7" y="602.9" width="66.80" height="25.10" rx="3.5" fill="url(#btn)" stroke="#9a9a9a" stroke-width="1" />
<text x="193.96" y="619.70" font-family="Liberation Sans" font-weight="normal" font-size="12.17" fill="#111" stroke="#111" stroke-width="0.2" textLength="14.32" lengthAdjust="spacingAndGlyphs" >20</text>
<circle cx="274.9" cy="604.3" r="23.9" fill="#6c6e70"/>
<path d="M264.23 617.02 A16.6 16.6 0 1 1 285.57 617.02" fill="none" stroke="#f4f4f4" stroke-width="4.6"/>
<circle cx="274.9" cy="604.3" r="14.20" fill="#a0a1a2"/>
<line x1="274.9" y1="604.3" x2="265.90" y2="615.02" stroke="#4a4a4a" stroke-width="2.4" stroke-linecap="round"/>
<text x="322.25" y="453.60" font-family="Liberation Sans" font-weight="normal" font-size="13.33" fill="#363636" stroke="#363636" stroke-width="0.2" textLength="25.00" lengthAdjust="spacingAndGlyphs" >PEQ</text>
<rect x="646.3" y="435.8" width="64.00" height="26.20" rx="4" fill="#14b5f2" stroke="#1a98cc" stroke-width="1" />
<text x="656.62" y="453.75" font-family="Liberation Sans" font-weight="normal" font-size="12.68" fill="#fff" stroke="#fff" stroke-width="0.15" textLength="43.33" lengthAdjust="spacingAndGlyphs" >ENABLE</text>
<rect x="368.85" y="541.8000000000001" width="94.55" height="25.40" rx="3.5" fill="url(#btn)" stroke="#9a9a9a" stroke-width="1" />
<line x1="448.0" y1="542.7" x2="448.0" y2="566.3" stroke="#a8a8a8" stroke-width="1"/>
<path d="M452.0 552.7 L455.5 556.3 L459.0 552.7" fill="none" stroke="#555" stroke-width="1.4"/>
<text x="374.66" y="559.50" font-family="Liberation Sans" font-weight="normal" font-size="12.90" fill="#111" stroke="#111" stroke-width="0.2" textLength="42.60" lengthAdjust="spacingAndGlyphs" >BAND 1</text>
<rect x="368.85" y="585.7" width="94.55" height="25.70" rx="3.5" fill="url(#btn)" stroke="#9a9a9a" stroke-width="1" />
<line x1="448.0" y1="586.6" x2="448.0" y2="610.5" stroke="#a8a8a8" stroke-width="1"/>
<path d="M452.0 596.8 L455.5 600.3 L459.0 596.8" fill="none" stroke="#555" stroke-width="1.4"/>
<text x="374.72" y="603.20" font-family="Liberation Sans" font-weight="normal" font-size="12.75" fill="#111" stroke="#111" stroke-width="0.2" textLength="23.30" lengthAdjust="spacingAndGlyphs" >PEQ</text>
<text x="479.53" y="531.90" font-family="Liberation Sans" font-weight="normal" font-size="13.04" fill="#363636" stroke="#363636" stroke-width="0.2" textLength="50.88" lengthAdjust="spacingAndGlyphs" >FREQ(Hz)</text>
<rect x="472.0" y="541.8000000000001" width="66.40" height="25.40" rx="3.5" fill="url(#btn)" stroke="#9a9a9a" stroke-width="1" />
<text x="494.47" y="559.40" font-family="Liberation Sans" font-weight="normal" font-size="12.75" fill="#111" stroke="#111" stroke-width="0.2" textLength="20.60" lengthAdjust="spacingAndGlyphs" >100</text>
<circle cx="505.2" cy="598.3" r="23.1" fill="#6c6e70"/>
<path d="M494.89 610.59 A16.04435146443515 16.04435146443515 0 0 1 490.12 592.81" fill="none" stroke="#18b4f0" stroke-width="4.44602510460251"/>
<path d="M490.12 592.81 A16.04435146443515 16.04435146443515 0 1 1 515.51 610.59" fill="none" stroke="#f4f4f4" stroke-width="4.44602510460251"/>
<circle cx="505.2" cy="598.3" r="13.72" fill="#a0a1a2"/>
<line x1="505.2" y1="598.3" x2="492.48" y2="593.67" stroke="#4a4a4a" stroke-width="2.4" stroke-linecap="round"/>
<text x="548.81" y="532.00" font-family="Liberation Sans" font-weight="normal" font-size="13.04" fill="#363636" stroke="#363636" stroke-width="0.2" textLength="50.88" lengthAdjust="spacingAndGlyphs" >GAIN(dB)</text>
<rect x="546.7" y="542.0" width="55.45" height="25.10" rx="3.5" fill="url(#btn)" stroke="#9a9a9a" stroke-width="1" />
<text x="565.48" y="559.10" font-family="Liberation Sans" font-weight="normal" font-size="12.75" fill="#111" stroke="#111" stroke-width="0.2" textLength="16.53" lengthAdjust="spacingAndGlyphs" >0.0</text>
<circle cx="574.3" cy="598.1" r="23.1" fill="#6c6e70"/>
<path d="M563.99 610.39 A16.04435146443515 16.04435146443515 0 0 1 574.30 582.06" fill="none" stroke="#18b4f0" stroke-width="4.44602510460251"/>
<path d="M574.30 582.06 A16.04435146443515 16.04435146443515 0 0 1 584.61 610.39" fill="none" stroke="#f4f4f4" stroke-width="4.44602510460251"/>
<circle cx="574.3" cy="598.1" r="13.72" fill="#a0a1a2"/>
<line x1="574.3" y1="598.1" x2="574.30" y2="584.57" stroke="#4a4a4a" stroke-width="2.4" stroke-linecap="round"/>
<text x="632.79" y="532.00" font-family="Liberation Sans" font-weight="normal" font-size="13.04" fill="#363636" stroke="#363636" stroke-width="0.2" textLength="10.62" lengthAdjust="spacingAndGlyphs" >Q</text>
<rect x="610.4" y="542.0" width="54.75" height="25.10" rx="3.5" fill="url(#qbtn)" stroke="#aaaaaa" stroke-width="1" />
<text x="625.72" y="559.10" font-family="Liberation Sans" font-weight="normal" font-size="12.75" fill="#111" stroke="#111" stroke-width="0.2" textLength="22.91" lengthAdjust="spacingAndGlyphs" >1.50</text>
<circle cx="638.1" cy="598.1" r="23.1" fill="#6c6e70"/>
<path d="M627.79 610.39 A16.04435146443515 16.04435146443515 0 0 1 624.80 589.13" fill="none" stroke="#18b4f0" stroke-width="4.44602510460251"/>
<path d="M624.80 589.13 A16.04435146443515 16.04435146443515 0 1 1 648.41 610.39" fill="none" stroke="#f4f4f4" stroke-width="4.44602510460251"/>
<circle cx="638.1" cy="598.1" r="13.72" fill="#a0a1a2"/>
<line x1="638.1" y1="598.1" x2="626.88" y2="590.53" stroke="#4a4a4a" stroke-width="2.4" stroke-linecap="round"/>
<text x="726.32" y="453.70" font-family="Liberation Sans" font-weight="normal" font-size="13.04" fill="#363636" stroke="#363636" stroke-width="0.2" textLength="62.86" lengthAdjust="spacingAndGlyphs" >LOW PASS</text>
<rect x="797.6" y="435.6" width="64.60" height="26.80" rx="3.5" fill="url(#btn)" stroke="#9a9a9a" stroke-width="1" />
<text x="808.53" y="453.60" font-family="Liberation Sans" font-weight="normal" font-size="12.03" fill="#111" stroke="#111" stroke-width="0.2" textLength="42.71" lengthAdjust="spacingAndGlyphs" >ENABLE</text>
<rect x="727.4" y="512.8000000000001" width="134.80" height="25.00" rx="3.5" fill="url(#btn)" stroke="#9a9a9a" stroke-width="1" />
<line x1="846.9" y1="513.7" x2="846.9" y2="536.9" stroke="#a8a8a8" stroke-width="1"/>
<path d="M850.8 523.5 L854.3 527.1 L857.8 523.5" fill="none" stroke="#555" stroke-width="1.4"/>
<text x="733.21" y="530.30" font-family="Liberation Sans" font-weight="normal" font-size="12.03" fill="#111" stroke="#111" stroke-width="0.2" textLength="38.19" lengthAdjust="spacingAndGlyphs" >BESSEL</text>
<rect x="727.4" y="546.9" width="134.80" height="24.90" rx="3.5" fill="url(#btn)" stroke="#9a9a9a" stroke-width="1" />
<line x1="846.8" y1="547.8" x2="846.8" y2="570.9" stroke="#a8a8a8" stroke-width="1"/>
<path d="M850.8 557.5 L854.3 561.1 L857.8 557.5" fill="none" stroke="#555" stroke-width="1.4"/>
<text x="733.39" y="564.30" font-family="Liberation Sans" font-weight="normal" font-size="12.75" fill="#111" stroke="#111" stroke-width="0.2" textLength="47.56" lengthAdjust="spacingAndGlyphs" >-6dB/oct</text>
<text x="726.53" y="592.50" font-family="Liberation Sans" font-weight="normal" font-size="12.75" fill="#363636" stroke="#363636" stroke-width="0.2" textLength="50.88" lengthAdjust="spacingAndGlyphs" >FREQ(Hz)</text>
<rect x="727.5" y="602.9" width="66.30" height="25.10" rx="3.5" fill="url(#btn)" stroke="#9a9a9a" stroke-width="1" />
<text x="743.20" y="619.70" font-family="Liberation Sans" font-weight="normal" font-size="12.90" fill="#111" stroke="#111" stroke-width="0.2" textLength="33.64" lengthAdjust="spacingAndGlyphs" >20000</text>
<circle cx="831.8" cy="604.3" r="23.9" fill="#6c6e70"/>
<path d="M821.13 617.02 A16.6 16.6 0 1 1 842.47 617.02" fill="none" stroke="#18b4f0" stroke-width="4.6"/>
<circle cx="831.8" cy="604.3" r="14.20" fill="#a0a1a2"/>
<line x1="831.8" y1="604.3" x2="840.80" y2="615.02" stroke="#4a4a4a" stroke-width="2.4" stroke-linecap="round"/>
<rect x="873.2" y="137.9" width="83.80" height="539.30" rx="4" fill="#c3c3c3" stroke="#00daf6" stroke-width="2" />
<rect x="874.2" y="138.9" width="81.80" height="26.40" rx="2.5" fill="#a0a0a0" />
<text x="902.44" y="156.20" font-family="Liberation Sans" font-weight="normal" font-size="12.75" fill="#f4f4f4" stroke="#f4f4f4" stroke-width="0.15" textLength="21.68" lengthAdjust="spacingAndGlyphs" >IN 1</text>
<rect x="876.5999999999999" y="170.60000000000002" width="24.10" height="18.90" rx="4" fill="url(#sbtn)" stroke="#c4c4c4" stroke-width="0.8" />
<rect x="903.0999999999999" y="170.60000000000002" width="23.60" height="18.90" rx="4" fill="url(#sbtn)" stroke="#c4c4c4" stroke-width="0.8" />
<rect x="929.5" y="170.60000000000002" width="24.40" height="18.90" rx="4" fill="url(#sbtn)" stroke="#c4c4c4" stroke-width="0.8" />
<text x="878.69" y="184.10" font-family="Liberation Sans" font-weight="normal" font-size="11.88" fill="#111" stroke="#111" stroke-width="0.2" textLength="18.96" lengthAdjust="spacingAndGlyphs" >48V</text>
<text x="904.97" y="184.10" font-family="Liberation Sans" font-weight="normal" font-size="11.88" fill="#111" stroke="#111" stroke-width="0.2" textLength="19.16" lengthAdjust="spacingAndGlyphs" >INV</text>
<text x="935.11" y="184.10" font-family="Liberation Sans" font-weight="normal" font-size="11.88" fill="#111" stroke="#111" stroke-width="0.2" textLength="12.61" lengthAdjust="spacingAndGlyphs" >FB</text>
<rect x="876.4" y="192.0" width="77.70" height="17.80" rx="4" fill="url(#sbtn)" stroke="#c4c4c4" stroke-width="0.8" />
<path d="M877.4 201.3 L915.2 208.4 L953.1 201.3 L953.1 208.6 L877.4 208.6 Z" fill="#e4e4e4" fill-opacity="0.35" stroke="#b4b4b4" stroke-width="0.9"/>
<text x="898.63" y="205.90" font-family="Liberation Sans" font-weight="normal" font-size="11.45" fill="#111" stroke="#111" stroke-width="0.2" textLength="32.47" lengthAdjust="spacingAndGlyphs" >PAN C</text>
<rect x="876.4" y="213.60000000000002" width="77.70" height="18.10" rx="4" fill="url(#sbtn)" stroke="#c4c4c4" stroke-width="0.8" />
<text x="889.76" y="227.00" font-family="Liberation Sans" font-weight="normal" font-size="11.59" fill="#111" stroke="#111" stroke-width="0.2" textLength="50.61" lengthAdjust="spacingAndGlyphs" >GAIN 30.0</text>
<line x1="878" y1="228.9" x2="952" y2="228.9" stroke="#b0b0b0" stroke-width="1.2"/>
<line x1="878" y1="228.9" x2="926.8" y2="228.9" stroke="#20a8e0" stroke-width="1.6"/>
<circle cx="888" cy="243.2" r="5" fill="#d8d8d8"/>
<rect x="903" y="234" width="51.20" height="19.30" rx="4" fill="#14b5f2" />
<text x="915.39" y="248.00" font-family="Liberation Sans" font-weight="normal" font-size="11.30" fill="#fff" stroke="#fff" stroke-width="0.15" textLength="26.85" lengthAdjust="spacingAndGlyphs" >GATE</text>
<line x1="873.7" y1="257.3" x2="956.5" y2="257.3" stroke="#b0b0b0" stroke-width="1"/>
<rect x="876.5" y="260.1" width="24.20" height="15.60" rx="4" fill="url(#sbtn)" stroke="#c4c4c4" stroke-width="0.8" />
<rect x="903" y="260" width="24.20" height="15.80" rx="3.5" fill="#14b5f2" />
<rect x="929.4" y="260.1" width="24.50" height="15.60" rx="4" fill="url(#sbtn)" stroke="#c4c4c4" stroke-width="0.8" />
<text x="877.86" y="271.60" font-family="Liberation Sans" font-weight="normal" font-size="10.43" fill="#111" stroke="#111" stroke-width="0.2" textLength="21.11" lengthAdjust="spacingAndGlyphs" >HPF</text>
<text x="904.40" y="271.60" font-family="Liberation Sans" font-weight="normal" font-size="10.43" fill="#fff" stroke="#fff" stroke-width="0.15" textLength="21.17" lengthAdjust="spacingAndGlyphs" >PEQ</text>
<text x="933.12" y="271.60" font-family="Liberation Sans" font-weight="normal" font-size="10.43" fill="#111" stroke="#111" stroke-width="0.2" textLength="17.91" lengthAdjust="spacingAndGlyphs" >LPF</text>
<line x1="873.7" y1="312" x2="956.5" y2="312" stroke="#18b8f0" stroke-width="2"/>
<line x1="873.7" y1="347.3" x2="956.5" y2="347.3" stroke="#b0b0b0" stroke-width="1"/>
<path d="M956.5 348 L956.5 437.3 L875 437.3 Z" fill="#b3b3b3"/>
<rect x="876.3" y="350.5" width="40.40" height="15.00" rx="4" fill="url(#sbtn)" stroke="#c4c4c4" stroke-width="0.8" />
<text x="879.96" y="362.10" font-family="Liberation Sans" font-weight="normal" font-size="10.72" fill="#111" stroke="#111" stroke-width="0.2" textLength="32.48" lengthAdjust="spacingAndGlyphs" >COMP</text>
<line x1="873.7" y1="437.8" x2="956.5" y2="437.8" stroke="#b0b0b0" stroke-width="1"/>
<text x="877.19" y="450.00" font-family="Liberation Sans" font-weight="normal" font-size="11.59" fill="#222" stroke="#222" stroke-width="0.2" textLength="55.93" lengthAdjust="spacingAndGlyphs" >BUS MIXER</text>
<rect x="876.3" y="455.90000000000003" width="28.40" height="14.80" rx="4" fill="url(#sbtn)" stroke="#c4c4c4" stroke-width="0.8" />
<rect x="907.0999999999999" y="455.90000000000003" width="22.60" height="14.80" rx="4" fill="url(#sbtn)" stroke="#c4c4c4" stroke-width="0.8" />
<rect x="932.1999999999999" y="455.90000000000003" width="21.90" height="14.80" rx="4" fill="url(#sbtn)" stroke="#c4c4c4" stroke-width="0.8" />
<rect x="876.3" y="474.1" width="13.10" height="13.40" rx="4" fill="url(#sbtn)" stroke="#c4c4c4" stroke-width="0.8" />
<rect x="892.1999999999999" y="474.1" width="12.50" height="13.40" rx="4" fill="url(#sbtn)" stroke="#c4c4c4" stroke-width="0.8" />
<text x="883.25" y="467.30" font-family="Liberation Sans" font-weight="normal" font-size="9.42" fill="#222" stroke="#222" stroke-width="0.2" textLength="14.53" lengthAdjust="spacingAndGlyphs" >L/R</text>
<text x="916.12" y="467.30" font-family="Liberation Sans" font-weight="normal" font-size="9.42" fill="#222" stroke="#222" stroke-width="0.2" textLength="3.58" lengthAdjust="spacingAndGlyphs" >1</text>
<text x="940.08" y="467.30" font-family="Liberation Sans" font-weight="normal" font-size="9.42" fill="#222" stroke="#222" stroke-width="0.2" textLength="5.80" lengthAdjust="spacingAndGlyphs" >2</text>
<text x="879.71" y="484.00" font-family="Liberation Sans" font-weight="normal" font-size="9.42" fill="#222" stroke="#222" stroke-width="0.2" textLength="6.14" lengthAdjust="spacingAndGlyphs" >3</text>
<text x="894.89" y="484.00" font-family="Liberation Sans" font-weight="normal" font-size="9.42" fill="#222" stroke="#222" stroke-width="0.2" textLength="5.78" lengthAdjust="spacingAndGlyphs" >4</text>
<line x1="873.7" y1="527" x2="956.5" y2="527" stroke="#b0b0b0" stroke-width="1"/>
<text x="885.91" y="540.30" font-family="Liberation Sans" font-weight="normal" font-size="9.13" fill="#444" stroke="#444" stroke-width="0.1" textLength="13.93" lengthAdjust="spacingAndGlyphs" >-60</text>
<rect x="888.5" y="543.1" width="8.50" height="59.30" rx="3" fill="url(#meter)" stroke="#1c1c1c" stroke-width="1" />
<rect x="909.8000000000001" y="531.9" width="45.50" height="22.40" rx="4" fill="url(#btn)" stroke="#9a9a9a" stroke-width="1" />
<text x="915.42" y="547.80" font-family="Liberation Sans" font-weight="normal" font-size="12.75" fill="#111" stroke="#111" stroke-width="0.2" textLength="33.90" lengthAdjust="spacingAndGlyphs" >-100.0</text>
<circle cx="932.7" cy="580" r="22.7" fill="#6c6e70"/>
<path d="M922.57 592.08 A15.76652719665272 15.76652719665272 0 1 1 942.83 592.08" fill="none" stroke="#f4f4f4" stroke-width="4.369037656903766"/>
<circle cx="932.7" cy="580" r="13.49" fill="#a0a1a2"/>
<line x1="932.7" y1="580" x2="924.15" y2="590.19" stroke="#4a4a4a" stroke-width="2.4" stroke-linecap="round"/>
<rect x="878.7" y="607.7" width="73.00" height="26.60" rx="4" fill="url(#btn)" stroke="#9a9a9a" stroke-width="1" />
<text x="898.88" y="625.70" font-family="Liberation Sans" font-weight="normal" font-size="12.46" fill="#111" stroke="#111" stroke-width="0.2" textLength="32.51" lengthAdjust="spacingAndGlyphs" >MUTE</text>
<path d="M874.2 638.6 L956 638.6 L956 673.8 Q956 676.2 953.6 676.2 L876.6 676.2 Q874.2 676.2 874.2 673.8 Z" fill="#00dcf6"/>
<text x="903.63" y="654.60" font-family="Liberation Sans" font-weight="normal" font-size="11.74" fill="#111" stroke="#111" stroke-width="0.2" textLength="21.79" lengthAdjust="spacingAndGlyphs" >IN 1</text>
</svg>
</body></html>
